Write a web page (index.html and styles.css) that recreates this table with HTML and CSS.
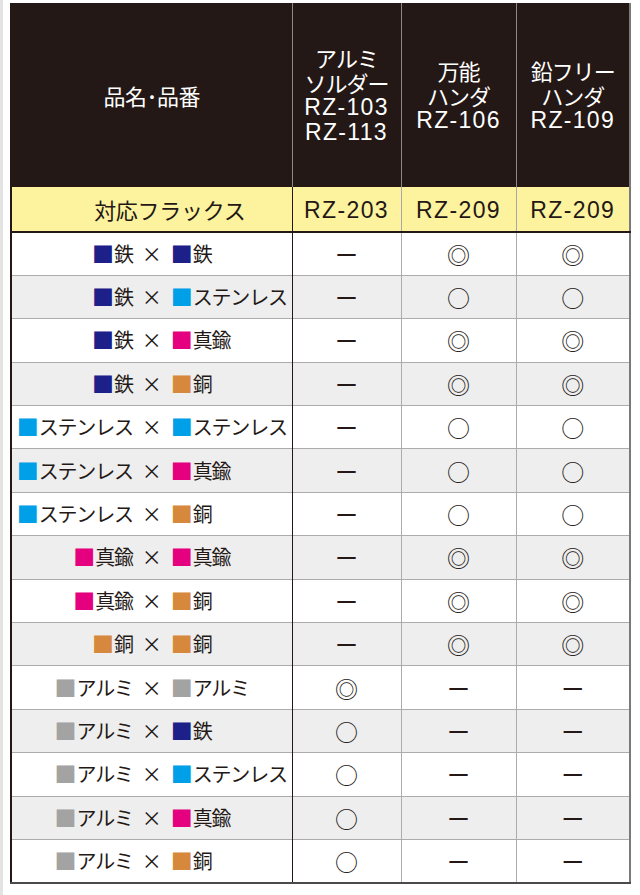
FILE: index.html
```html
<!DOCTYPE html>
<html lang="ja">
<head>
<meta charset="utf-8">
<title>対応フラックス表</title>
<link rel="stylesheet" href="styles.css">
</head>
<body>
<div class="page">
  <div class="edge"></div>
  <table class="chart">
    <colgroup>
      <col class="c-name"><col class="c-a"><col class="c-b"><col class="c-c">
    </colgroup>
    <thead>
      <tr class="head">
        <th>品名･品番</th>
        <th><span class="ln">アルミ</span><span class="ln">ソルダー</span><span class="ln lat">RZ-103</span><span class="ln lat">RZ-113</span></th>
        <th><span class="ln">万能</span><span class="ln">ハンダ</span><span class="ln lat">RZ-106</span></th>
        <th><span class="ln">鉛フリー</span><span class="ln">ハンダ</span><span class="ln lat">RZ-109</span></th>
      </tr>
      <tr class="flux">
        <th class="flux-label">対応フラックス</th>
        <th><span class="lat">RZ-203</span></th>
        <th><span class="lat">RZ-209</span></th>
        <th><span class="lat">RZ-209</span></th>
      </tr>
    </thead>
    <tbody>
      <tr><td><div class="pair"><span class="a"><i class="fe">■</i>鉄</span><span class="x">×</span><span class="b"><i class="fe">■</i>鉄</span></div></td><td class="m">ー</td><td class="m">◎</td><td class="m">◎</td></tr>
      <tr><td><div class="pair"><span class="a"><i class="fe">■</i>鉄</span><span class="x">×</span><span class="b"><i class="ss">■</i>ステンレス</span></div></td><td class="m">ー</td><td class="m">○</td><td class="m">○</td></tr>
      <tr><td><div class="pair"><span class="a"><i class="fe">■</i>鉄</span><span class="x">×</span><span class="b"><i class="br">■</i>真鍮</span></div></td><td class="m">ー</td><td class="m">◎</td><td class="m">◎</td></tr>
      <tr><td><div class="pair"><span class="a"><i class="fe">■</i>鉄</span><span class="x">×</span><span class="b"><i class="cu">■</i>銅</span></div></td><td class="m">ー</td><td class="m">◎</td><td class="m">◎</td></tr>
      <tr><td><div class="pair"><span class="a"><i class="ss">■</i>ステンレス</span><span class="x">×</span><span class="b"><i class="ss">■</i>ステンレス</span></div></td><td class="m">ー</td><td class="m">○</td><td class="m">○</td></tr>
      <tr><td><div class="pair"><span class="a"><i class="ss">■</i>ステンレス</span><span class="x">×</span><span class="b"><i class="br">■</i>真鍮</span></div></td><td class="m">ー</td><td class="m">○</td><td class="m">○</td></tr>
      <tr><td><div class="pair"><span class="a"><i class="ss">■</i>ステンレス</span><span class="x">×</span><span class="b"><i class="cu">■</i>銅</span></div></td><td class="m">ー</td><td class="m">○</td><td class="m">○</td></tr>
      <tr><td><div class="pair"><span class="a"><i class="br">■</i>真鍮</span><span class="x">×</span><span class="b"><i class="br">■</i>真鍮</span></div></td><td class="m">ー</td><td class="m">◎</td><td class="m">◎</td></tr>
      <tr><td><div class="pair"><span class="a"><i class="br">■</i>真鍮</span><span class="x">×</span><span class="b"><i class="cu">■</i>銅</span></div></td><td class="m">ー</td><td class="m">◎</td><td class="m">◎</td></tr>
      <tr><td><div class="pair"><span class="a"><i class="cu">■</i>銅</span><span class="x">×</span><span class="b"><i class="cu">■</i>銅</span></div></td><td class="m">ー</td><td class="m">◎</td><td class="m">◎</td></tr>
      <tr><td><div class="pair"><span class="a"><i class="al">■</i>アルミ</span><span class="x">×</span><span class="b"><i class="al">■</i>アルミ</span></div></td><td class="m">◎</td><td class="m">ー</td><td class="m">ー</td></tr>
      <tr><td><div class="pair"><span class="a"><i class="al">■</i>アルミ</span><span class="x">×</span><span class="b"><i class="fe">■</i>鉄</span></div></td><td class="m">○</td><td class="m">ー</td><td class="m">ー</td></tr>
      <tr><td><div class="pair"><span class="a"><i class="al">■</i>アルミ</span><span class="x">×</span><span class="b"><i class="ss">■</i>ステンレス</span></div></td><td class="m">○</td><td class="m">ー</td><td class="m">ー</td></tr>
      <tr><td><div class="pair"><span class="a"><i class="al">■</i>アルミ</span><span class="x">×</span><span class="b"><i class="br">■</i>真鍮</span></div></td><td class="m">○</td><td class="m">ー</td><td class="m">ー</td></tr>
      <tr><td><div class="pair"><span class="a"><i class="al">■</i>アルミ</span><span class="x">×</span><span class="b"><i class="cu">■</i>銅</span></div></td><td class="m">○</td><td class="m">ー</td><td class="m">ー</td></tr>
    </tbody>
  </table>
</div>
</body>
</html>
```

FILE: styles.css
```css
html, body {
  margin: 0;
  padding: 0;
  background: #ffffff;
}

body {
  font-family: "Noto Sans CJK JP", "Noto Sans", sans-serif;
  color: #231815;
}

.page {
  display: flex;
  min-height: 895px;
}

.edge {
  width: 3px;
  background: #e3e3e3;
  margin-right: 7px;
  flex: none;
}

.chart {
  align-self: flex-start;
  margin-top: 3px;
  width: 621px;
  border-collapse: collapse;
  table-layout: fixed;
  border-left: 2px solid #231815;
  border-right: 2px solid #7a7a7a;
  border-bottom: 2px solid #4a4a4a;
}

.c-name { width: 281px; }
.c-a { width: 109px; }
.c-b { width: 115px; }
.c-c { width: 114px; }

.lat {
  font-family: "Liberation Sans", Arial, sans-serif;
  font-size: 23px;
  letter-spacing: 1.4px;
}

.ln {
  display: block;
  height: 25px;
  line-height: 25px;
  letter-spacing: -1px;
}

.ln.lat {
  letter-spacing: 1.3px;
}

.head th {
  height: 184px;
  padding: 0;
  background: #231815;
  color: #ffffff;
  font-weight: 400;
  font-size: 22px;
  line-height: 25px;
  text-align: center;
  vertical-align: middle;
  border-left: 1px solid #8c8684;
}

.head th:first-child {
  border-left: none;
  letter-spacing: -0.5px;
}

.flux th {
  height: 44px;
  padding: 0;
  background: #fdf39e;
  font-weight: 400;
  font-size: 22px;
  line-height: 26px;
  text-align: center;
  border-left: 1px solid #a8a8a8;
  border-bottom: 2px solid #231815;
}

.flux th.flux-label {
  border-left: none;
  border-right: 1px solid #231815;
  padding-left: 36px;
  letter-spacing: -0.3px;
}

tbody tr {
  height: 43.4px;
}

tbody tr:nth-child(even) td {
  background: #eeeeee;
}

tbody td {
  padding: 0;
  border-top: 1px solid #acacac;
  border-left: 1px solid #acacac;
  vertical-align: middle;
}

tbody td:first-child {
  border-left: none;
  border-right: 1px solid #231815;
}

tbody tr:first-child td {
  border-top: none;
}

.pair {
  display: grid;
  grid-template-columns: 1fr auto 1fr;
  column-gap: 9px;
  align-items: center;
  font-size: 20px;
  line-height: 24px;
  white-space: nowrap;
  letter-spacing: -1.2px;
}

.pair .a { text-align: right; }
.pair .b { text-align: left; }

.pair i {
  font-style: normal;
  font-size: 22px;
  line-height: 0;
  letter-spacing: -1px;
  margin-right: 1px;
}

.pair .x {
  font-size: 20px;
  letter-spacing: 0;
}

.fe { color: #1d2088; }
.ss { color: #00a0e9; }
.br { color: #e4007f; }
.cu { color: #d6893c; }
.al { color: #a3a3a3; }

.m {
  text-align: center;
  font-size: 23px;
  line-height: 26px;
  color: #231815;
}
```
